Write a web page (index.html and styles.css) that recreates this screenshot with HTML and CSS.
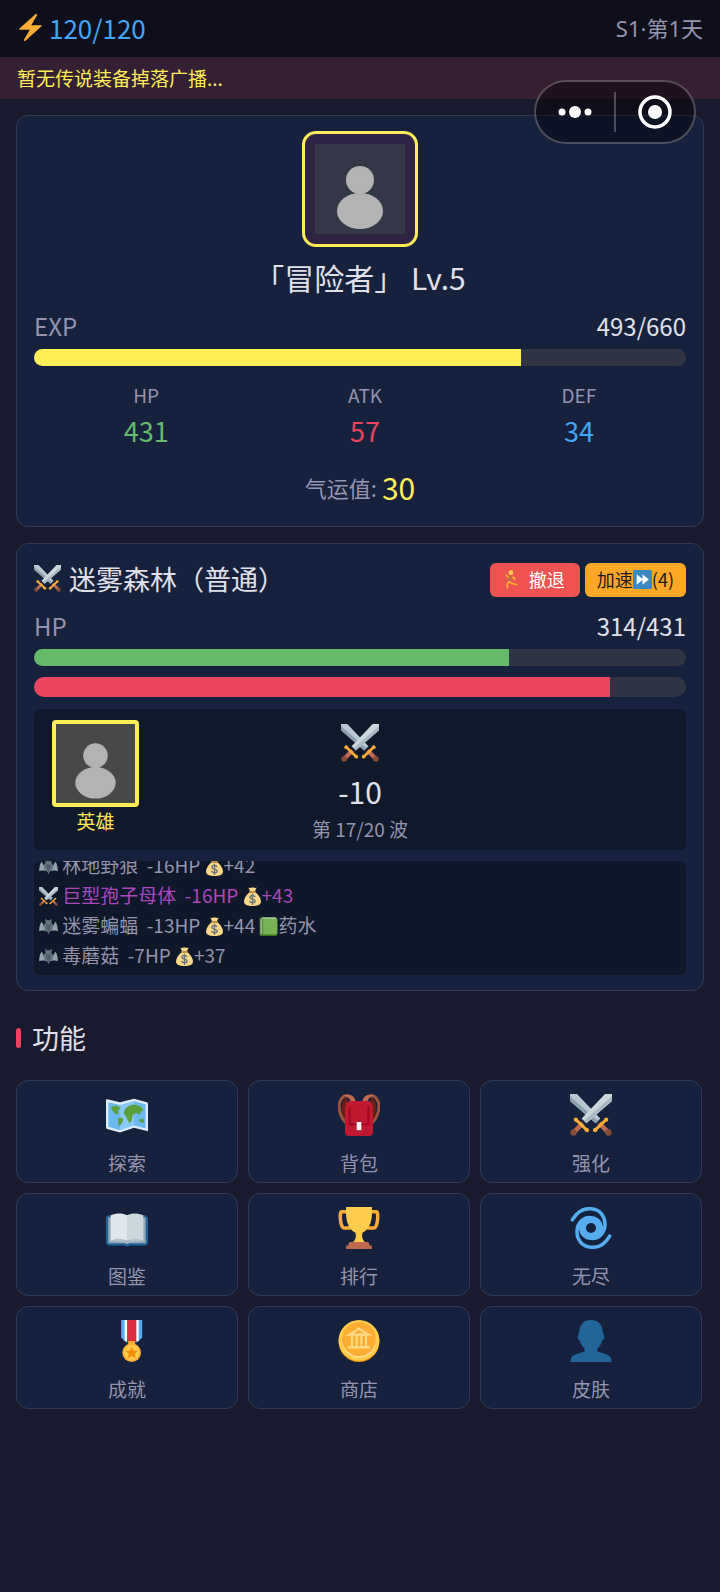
FILE: index.html
```html
<!DOCTYPE html>
<html lang="zh-CN">
  <head>
    <meta charset="UTF-8" />
    <meta name="viewport" content="width=device-width, initial-scale=1.0" />
    <title>冒险</title>
    <link rel="stylesheet" href="styles.css">
  </head>
  <body>
    <!-- shared icons -->
    <svg class="sprite" aria-hidden="true">
      <symbol id="bolt" viewBox="0 0 36 36">
        <path fill="#ffac33" d="M32.9 15.4c-.2-.3-.5-.4-.9-.4H19L26.7 1.700C27 1 26.600.3 26 0c-.6-.2-1 0-1.500.4L3.300 19.200c-.3.300-.4.700-.3 1.100.2.400.6.700 1 .7h13L9.200 34.300c-.3.700 0 1.300.6 1.600.6.200 1 0 1.400-.3l21.500-19.100c.3-.3.400-.7.200-1.100z"/>
      </symbol>
      <symbol id="swords" viewBox="0 0 36 36">
        <path fill="#b8c8d2" d="M0 0h6l20 21-4 4L0 6z"/>
        <path fill="#8ca0ad" d="M0 6V2l24 21-2 2z"/>
        <path stroke="#bf6952" stroke-width="4" d="m25 25 7 7"/>
        <path stroke="#ffac33" stroke-width="2.500" stroke-linecap="round" d="m21.500 31 9.500-9"/>
        <circle fill="#ffac33" cx="21.500" cy="31" r="1.800"/><circle fill="#ffac33" cx="31" cy="22" r="1.800"/>
        <circle fill="#8a4b38" cx="33" cy="33" r="2.700"/>
        <path fill="#ccd6dd" d="M36 0h-6L10 21l4 4L36 6z"/>
        <path fill="#a9bac5" d="M36 6V2L12 23l2 2z"/>
        <path stroke="#bf6952" stroke-width="4" d="m11 25-7 7"/>
        <path stroke="#ffac33" stroke-width="2.500" stroke-linecap="round" d="M14.500 31 5 22"/>
        <circle fill="#ffac33" cx="14.500" cy="31" r="1.800"/><circle fill="#ffac33" cx="5" cy="22" r="1.800"/>
        <circle fill="#8a4b38" cx="3" cy="33" r="2.700"/>
      </symbol>
      <symbol id="bat" viewBox="0 0 36 36">
        <path fill="#66757f" d="M13 10c-2-3-1-5-1-7l3 3h6l3-3c0 2 1 4-1 7 1 2 3 4 4 6l4-7c3 4 5 10 5 18-2-2-4-2-6-1-2-2-5-1-6 1-2-1-4 0-6 6-2-6-4-7-6-6-1-2-4-3-6-1-2-1-4-1-6 1 0-8 2-14 5-18l4 7c1-2 3-4 4-6z"/>
        <path fill="#92a3ad" d="M5 9c3 5 5 11 6 17-2-2-8-1-10 1 0-8 1-14 4-18zm26 0c-3 5-5 11-6 17 2-2 8-1 10 1 0-8-1-14-4-18z"/>
        <path fill="#50606a" d="M14 12c2 3 6 3 8 0 1 5 0 13-4 18-4-5-5-13-4-18z"/>
      </symbol>
      <symbol id="money" viewBox="0 0 36 36">
        <path fill="#fdd888" d="M13 10c-6 4-11 11-11 18 0 6 7 8 16 8s16-2 16-8c0-7-5-14-11-18z"/>
        <path fill="#fdd888" d="m10 1 4 8h8l4-8c-3 2-5-1-8 0-3-1-5 2-8 0z"/>
        <rect fill="#bf9040" x="11" y="8" width="14" height="3" rx="1.500"/>
        <path fill="none" stroke="#67757f" stroke-width="2.600" d="M23 19c-1-2-3-3-5-3-3 0-5 1-5 3.500 0 5 10 2 10 7 0 2-2 3.500-5 3.500s-5-1-5.500-3.500M18 13v21"/>
      </symbol>
      <symbol id="potion" viewBox="0 0 36 36">
        <rect fill="#3e721d" x="1" width="33" height="36" rx="3"/>
        <path fill="#ccd6dd" d="M6 1h26v4H6zM3 4h3v28H3z"/>
        <rect fill="#77b255" x="5" y="3" width="30" height="30" rx="2"/>
        <path fill="#5c913b" d="M5 4h3v29H5z"/>
      </symbol>
      <symbol id="runner" viewBox="0 0 36 36">
        <circle fill="#ffcc4d" cx="17" cy="5" r="4.500"/>
        <path fill="none" stroke="#ffac33" stroke-width="3.500" d="m7 9 7 6 8-1 3 5"/>
        <path fill="none" stroke="#c1694f" stroke-width="6" d="m17 12-4 10"/>
        <path fill="none" stroke="#ffac33" stroke-width="3.500" d="m13 22 7 4 9 2M12 22l-2 6v7"/>
      </symbol>
      <symbol id="forward" viewBox="0 0 36 36">
        <rect fill="#3b88c3" width="36" height="36" rx="3"/>
        <path fill="#fff" d="M7 8l12 10L7 28zm11 0 12 10-12 10z"/>
      </symbol>
      <symbol id="map" viewBox="0 0 36 36">
        <path fill="#ddeefb" d="M1 4.500 12 7l12-3 11 3c.7.200 1 1 1 2v23l-12-3-12 4-11-3c-.6-.2-1-1-1-2V5.500c0-.7.400-1 1-1z"/>
        <path fill="#6db9f2" d="m2 7 10 2.500V31L2 28zM24 6l10 3v20.500L24 27z"/>
        <path fill="#88c9f9" d="m12 9.500 12-3.500v21l-12 4z"/>
        <path fill="#5c9f3b" d="m4 11 5-1 4 2-3 2 1 2-2 2-3-3zM10 21l3-1 2 2-2 4-2 2zM15 16l2-4 3-2 4-1 6 2 2 3-2 1-1 3-3-2-3 2-1 5-2 2-2-4zM28 22l4-1 1 4-4-1z"/>
      </symbol>
      <symbol id="backpack" viewBox="0 0 36 36">
        <path fill="#662113" d="M8 3C1 5 2 18 8 27zM28 3c7 2 6 15 0 24z"/>
        <path fill="none" stroke="#a0513b" stroke-width="2.500" d="M8 26C1 20-1 9 3 4c3-4 8-3 10 3M28 26c7-6 9-17 5-22-3-4-8-3-10 3"/>
        <path fill="#c1694f" d="M4 2c3-3 10-2 11 4l-4 1C10 3 7 1 4 2zM32 2c-3-3-10-2-11 4l4 1c1-4 4-6 7-5z"/>
        <path fill="#be1931" d="M10 6h16c3 0 4 3 4 8v18c0 3-1 4-4 4H10c-3 0-4-1-4-4V14c0-5 1-8 4-8z"/>
        <path fill="none" stroke="#a0041e" stroke-width="1.500" d="M10 11v15h16V11"/>
        <path fill="#fff" d="M16 24h4v7h-4z"/>
      </symbol>
      <symbol id="book" viewBox="0 0 36 36">
        <path fill="#226699" d="M3 7h30c1.500 0 3 1 3 3v20c0 1.500-1 3-3 3H20c0 1-4 1-4 0H3c-2 0-3-1.500-3-3V10c0-2 1-3 3-3z"/>
        <path fill="#99aab5" d="M2 9h32v22H20l-2 1-2-1H2z"/>
        <path fill="#e1e8ed" d="M4 7c5-2 10-2 14 0v22c-4-2-9-1-14 0z"/>
        <path fill="#ccd6dd" d="M32 7c-5-2-10-2-14 0v22c4-2 9-1 14 0z"/>
        <path fill="#b5c2ca" d="M4 29c5-3 10-2 14 1 4-3 9-4 14-1l-12 1-2 1-2-1z"/>
      </symbol>
      <symbol id="trophy" viewBox="0 0 36 36">
        <path fill="none" stroke="#ffac33" stroke-width="3" d="M9 4H3C1 4 2 18 5 18h6M27 4h6c2 0 1 14-2 14h-6"/>
        <path fill="#ffcc4d" d="M7 0h22c1 12-2 19-8 22-1 3 0 6 2 8H13c2-2 3-5 2-8C9 19 6 12 7 0z"/>
        <path fill="#c1694f" d="M11 30h14c2 0 2 2 2 3h2v3H7v-3h2c0-1 0-3 2-3z"/>
      </symbol>
      <symbol id="cyclone" viewBox="0 0 36 36">
        <circle fill="none" stroke="#55acee" stroke-width="6" cx="18" cy="18" r="7.300"/>
        <path fill="none" stroke="#55acee" stroke-width="3" stroke-linecap="round" d="M2 11C6 4 12 1 18 1.500c8 .5 12.500 7 12 14.500-.5 6-5 11-11 11M34 25c-4 7-10 10-16 9.500-8-.5-12.500-7-12-14.500.5-6 5-11 11-11"/>
      </symbol>
      <symbol id="medal" viewBox="0 0 36 36">
        <path fill="#55acee" d="M13 0h18v15l-4 4H17l-4-4z"/>
        <path fill="#fff" d="M16 0h12v18H16z"/>
        <path fill="#dd2e44" d="M18 0h8v19h-8z"/>
        <path fill="#ffac33" d="M19 18h6v5h-6z"/>
        <circle fill="#ffac33" cx="22" cy="28" r="8"/>
        <circle fill="#ffcc4d" cx="22" cy="28" r="6.500"/>
        <path fill="#f4900c" d="m22 22.500 1.500 3.600 4 .3-3 2.600 1 3.900-3.500-2.100-3.500 2.100 1-3.900-3-2.600 4-.3z"/>
      </symbol>
      <symbol id="coin" viewBox="0 0 36 36">
        <circle fill="#f4900c" cx="18" cy="18.500" r="17.500"/>
        <circle fill="#ffcc4d" cx="18" cy="17.500" r="17.500"/>
        <circle fill="#ffe8b6" cx="18" cy="17.500" r="14.500"/>
        <circle fill="#ffac33" cx="18" cy="16.500" r="14.500"/>
        <path fill="none" stroke="#ffd983" stroke-width="1.800" d="M9.500 12.500 18 7.500l8.500 5zM12 13v10M16 13v10M20 13v10M24 13v10M8.500 23.500h19"/>
      </symbol>
      <symbol id="person" viewBox="0 0 36 36">
        <path fill="#269" d="M18 0c6 0 10 4 10 10l1 3c1 2 0 4-1.500 4.500-.5 3-2 5-4 7V27c5 2 12 2 12 8v1h-35v-1c0-6 7-6 12-8v-2.500c-2-2-3.500-4-4-7C7 17 6 15 7 13l1-3C8 4 12 0 18 0z"/>
      </symbol>
      <symbol id="avatar" viewBox="0 0 90 90">
        <rect fill="currentColor" width="90" height="90"/>
        <circle fill="#b3b3b3" cx="45" cy="36" r="14"/>
        <ellipse fill="#b3b3b3" cx="45" cy="67" rx="23" ry="18"/>
      </symbol>
    </svg>

    <header class="top-bar">
      <div class="energy"><svg class="icon-energy"><use href="#bolt"/></svg>120/120</div>
      <div class="season">S1·第1天</div>
    </header>
    <div class="broadcast">暂无传说装备掉落广播...</div>

    <div class="capsule">
      <button type="button" aria-label="更多">
        <svg width="34" height="34" viewBox="0 0 34 34"><g fill="#fff"><circle cx="4" cy="17" r="3.500"/><circle cx="17" cy="17" r="6"/><circle cx="30" cy="17" r="3.500"/></g></svg>
      </button>
      <span class="capsule-line"></span>
      <button type="button" aria-label="关闭">
        <svg width="34" height="34" viewBox="0 0 34 34"><circle cx="17" cy="17" r="15" fill="none" stroke="#fff" stroke-width="3.500"/><circle cx="17" cy="17" r="7" fill="#fff"/></svg>
      </button>
    </div>

    <main class="page">
      <section class="card player">
        <div class="avatar"><svg><use href="#avatar"/></svg></div>
        <h1>「冒险者」 Lv.5</h1>
        <div class="row"><span class="label">EXP</span><span>493/660</span></div>
        <div class="bar"><div class="fill exp" style="width: 74.7%"></div></div>
        <div class="stats">
          <div><span class="stat-name">HP</span><span class="stat-value hp">431</span></div>
          <div><span class="stat-name">ATK</span><span class="stat-value atk">57</span></div>
          <div><span class="stat-name">DEF</span><span class="stat-value def">34</span></div>
        </div>
        <div class="luck"><span class="label">气运值:</span> <span class="luck-value">30</span></div>
      </section>

      <section class="card battle">
        <div class="battle-head">
          <h2><svg class="icon-title"><use href="#swords"/></svg>迷雾森林（普通）</h2>
          <button type="button" class="btn retreat"><svg class="icon-text"><use href="#runner"/></svg>撤退</button>
          <button type="button" class="btn speed">加速<svg class="icon-text"><use href="#forward"/></svg>(4)</button>
        </div>
        <div class="row"><span class="label">HP</span><span>314/431</span></div>
        <div class="bar"><div class="fill green" style="width: 72.8%"></div></div>
        <div class="bar enemy"><div class="fill red" style="width: 88.3%"></div></div>

        <div class="arena">
          <div class="hero">
            <svg class="hero-pic"><use href="#avatar"/></svg>
            <span>英雄</span>
          </div>
          <div class="clash">
            <svg class="icon-clash"><use href="#swords"/></svg>
            <span class="damage">-10</span>
            <span class="wave">第 17/20 波</span>
          </div>
        </div>

        <div class="log">
          <ul>
            <li><svg class="icon-text"><use href="#bat"/></svg> 林地野狼&nbsp; -16HP <svg class="icon-text"><use href="#money"/></svg>+42</li>
            <li class="boss"><svg class="icon-text"><use href="#swords"/></svg> 巨型孢子母体&nbsp; -16HP <svg class="icon-text"><use href="#money"/></svg>+43</li>
            <li><svg class="icon-text"><use href="#bat"/></svg> 迷雾蝙蝠&nbsp; -13HP <svg class="icon-text"><use href="#money"/></svg>+44 <svg class="icon-text"><use href="#potion"/></svg>药水</li>
            <li><svg class="icon-text"><use href="#bat"/></svg> 毒蘑菇&nbsp; -7HP <svg class="icon-text"><use href="#money"/></svg>+37</li>
          </ul>
        </div>
      </section>

      <h2 class="section-title">功能</h2>
      <nav class="menu">
        <button type="button"><svg><use href="#map"/></svg>探索</button>
        <button type="button"><svg><use href="#backpack"/></svg>背包</button>
        <button type="button"><svg><use href="#swords"/></svg>强化</button>
        <button type="button"><svg><use href="#book"/></svg>图鉴</button>
        <button type="button"><svg><use href="#trophy"/></svg>排行</button>
        <button type="button"><svg><use href="#cyclone"/></svg>无尽</button>
        <button type="button"><svg><use href="#medal"/></svg>成就</button>
        <button type="button"><svg><use href="#coin"/></svg>商店</button>
        <button type="button"><svg><use href="#person"/></svg>皮肤</button>
      </nav>
    </main>
  </body>
</html>
```
FILE: styles.css
```css
* {
  box-sizing: border-box;
}
body {
  margin: 0;
  min-height: 100vh;
  background: #1a1a2e;
  color: #e0e0ea;
  font-family: "Noto Sans CJK SC", sans-serif;
  font-size: 24px;
  line-height: 30px;
}
button {
  font: inherit;
  color: inherit;
  border: none;
  cursor: pointer;
}
h1,
h2 {
  margin: 0;
  font-weight: 400;
}
.sprite {
  display: none;
}
.top-bar {
  display: flex;
  align-items: center;
  justify-content: space-between;
  height: 57px;
  padding: 0 17px 2px;
  background: #0f0f1b;
}
.energy {
  display: flex;
  align-items: center;
  gap: 5px;
  color: #42a5f5;
  font-size: 26px;
}
.icon-energy {
  width: 27px;
  height: 27px;
}
.season {
  color: #9494ae;
  font-family: "Noto Sans", "Noto Sans CJK SC", sans-serif;
  font-size: 22px;
}
.broadcast {
  padding: 6px 17px;
  background: #351f33;
  color: #ffee58;
  font-size: 19px;
}

/* floating mini program buttons */
.capsule {
  position: absolute;
  top: 80px;
  right: 24px;
  z-index: 2;
  display: flex;
  align-items: center;
  width: 162px;
  height: 64px;
  border: 2px solid rgba(255, 255, 255, 0.25);
  border-radius: 32px;
  background: rgba(0, 0, 0, 0.4);
}
.capsule button {
  display: flex;
  flex: 1;
  justify-content: center;
  padding: 0;
  background: none;
}
.capsule-line {
  width: 2px;
  height: 40px;
  background: rgba(255, 255, 255, 0.25);
}

.page {
  padding: 16px;
}
.card {
  margin-bottom: 16px;
  padding: 15px 17px;
  border: 1px solid #303953;
  border-radius: 12px;
  background: #16213e;
}
.player {
  height: 412px;
}
.avatar {
  width: 116px;
  height: 116px;
  margin: 0 auto 10px;
  padding: 10px;
  border: 3px solid #ffee58;
  border-radius: 14px;
  background: #2f2444;
}
.avatar svg {
  display: block;
  width: 90px;
  height: 90px;
  color: #343746;
}
h1 {
  font-size: 30px;
  line-height: 40px;
  text-align: center;
}
.row {
  display: flex;
  justify-content: space-between;
}
.player .row {
  margin: 14px 0 8px;
}
.label {
  color: #9494ae;
}
.bar {
  height: 17px;
  border-radius: 9px;
  background: #303545;
  overflow: hidden;
}
.fill {
  height: 100%;
}
.exp {
  background: #ffee58;
}
.green {
  background: #66bb6a;
}
.red {
  background: #e94560;
}
.stats {
  display: flex;
  justify-content: space-around;
  margin-top: 14px;
  text-align: center;
}
.stats span {
  display: block;
}
.stat-name {
  color: #9494ae;
  font-size: 19px;
}
.stat-value {
  margin-top: 6px;
  font-size: 27px;
}
.hp {
  color: #66bb6a;
}
.atk {
  color: #e94560;
}
.def {
  color: #42a5f5;
}
.luck {
  display: flex;
  align-items: center;
  justify-content: center;
  gap: 5px;
  margin-top: 26px;
}
.luck .label {
  font-size: 22px;
}
.luck-value {
  color: #ffee58;
  font-size: 30px;
}

.battle-head {
  display: flex;
  align-items: center;
  gap: 5px;
  padding-top: 4px;
}
.battle-head h2 {
  display: flex;
  flex: 1;
  align-items: center;
  gap: 8px;
  margin-top: -3px;
  font-size: 27px;
}
.icon-title {
  width: 27px;
  height: 27px;
}
.icon-text {
  width: 19px;
  height: 19px;
  vertical-align: -3px;
}
.btn {
  display: flex;
  align-items: center;
  height: 34px;
  padding: 0 12px 2px;
  border-radius: 6px;
  font-size: 18px;
}
.retreat {
  gap: 8px;
  padding-right: 15px;
  background: #ef5350;
  color: #fff;
}
.speed {
  background: #ffa726;
  color: #1a1a1a;
}
.battle .row {
  margin: 14px 0 8px;
}
.enemy {
  height: 20px;
  margin-top: 11px;
  border-radius: 10px;
}
.arena {
  display: grid;
  grid-template-columns: 1fr auto 1fr;
  height: 141px;
  margin-top: 12px;
  padding: 11px 18px;
  border-radius: 6px;
  background: #10192c;
}
.hero {
  display: flex;
  flex-direction: column;
  width: 87px;
  color: #ffee58;
  font-size: 19px;
  line-height: 28px;
  text-align: center;
}
.hero-pic {
  width: 87px;
  height: 87px;
  border: 4px solid #ffee58;
  border-radius: 4px;
  background: #474947;
  color: #474947;
}
.clash {
  display: flex;
  flex-direction: column;
  align-items: center;
}
.icon-clash {
  width: 38px;
  height: 38px;
  margin: 4px 0 14px;
}
.damage {
  font-size: 30px;
}
.wave {
  margin-top: 8px;
  color: #9494ae;
  font-size: 19px;
}
.log {
  display: flex;
  align-items: flex-end;
  height: 114px;
  margin-top: 11px;
  padding: 0 5px 5px;
  border-radius: 6px;
  background: #0f172b;
  color: #9494ae;
  font-size: 19px;
  overflow: hidden;
}
.log ul {
  margin: 0;
  padding: 0;
  list-style: none;
}
.boss {
  color: #ab47bc;
}

.section-title {
  display: flex;
  align-items: center;
  gap: 11px;
  margin: 32px 0 27px;
  font-size: 27px;
}
.section-title::before {
  content: "";
  width: 5px;
  height: 20px;
  border-radius: 3px;
  background: #e94560;
}
.menu {
  display: grid;
  grid-template-columns: repeat(3, 1fr);
  gap: 10px;
  padding-right: 2px;
}
.menu button {
  display: flex;
  flex-direction: column;
  align-items: center;
  gap: 12px;
  height: 103px;
  padding: 13px 0 0;
  border: 1px solid #303953;
  border-radius: 12px;
  background: #16213e;
  color: #9494ae;
  font-size: 19px;
}
.menu svg {
  width: 42px;
  height: 42px;
}
```
